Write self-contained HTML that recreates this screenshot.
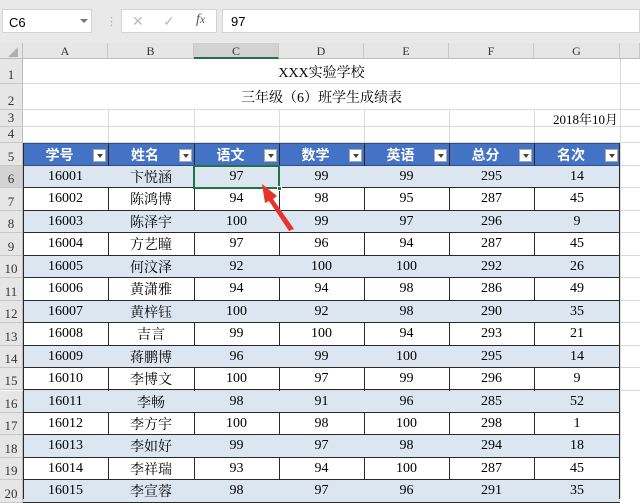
<!DOCTYPE html><html><head><meta charset="utf-8"><style>
body{margin:0;width:640px;height:499px;overflow:hidden;background:#fff;font-family:"Liberation Serif","Noto Serif CJK SC",serif;position:relative}
.a{position:absolute;box-sizing:border-box}
.c{position:absolute;box-sizing:border-box;display:flex;align-items:center;justify-content:center;font-size:14px;color:#000}
.rh{position:absolute;left:0;width:23px;background:#e6e6e6;border-bottom:1px solid #c8c8c8;border-right:1px solid #bdbdbd;font-size:13px;color:#333;display:flex;align-items:flex-end;justify-content:center;box-sizing:border-box;font-family:"Liberation Serif",serif}
.ch{position:absolute;top:43px;height:16px;background:#e6e6e6;border-right:1px solid #c8c8c8;border-bottom:1px solid #bdbdbd;font-size:12px;color:#333;text-align:center;line-height:16px;box-sizing:border-box}
.dd{position:absolute;width:13px;height:13px;background:#fff;border:1px solid #aaa;box-sizing:border-box}
.dd:after{content:"";position:absolute;left:3px;top:4px;border:3px solid transparent;border-top:4px solid #444}
</style></head><body>
<div class="a" style="left:0;top:0;width:640px;height:43px;background:#e9e9e9"></div>
<div class="a" style="left:2px;top:9px;width:90px;height:24px;background:#fff;border:1px solid #d4d4d4;font:13px 'Liberation Sans',sans-serif;padding:5px 6px">C6</div>
<div class="a" style="left:80px;top:19px;border:4px solid transparent;border-top:4px solid #777"></div>
<div class="a" style="left:106px;top:15px;color:#aaa;font:11px sans-serif">⋮</div>
<div class="a" style="left:121px;top:9px;width:96px;height:24px;background:#fff;border:1px solid #d4d4d4;font:14px 'Liberation Sans',sans-serif;color:#bbb"><span style="position:absolute;left:10px;top:3px">✕</span><span style="position:absolute;left:41px;top:3px">✓</span><span style="position:absolute;left:74px;top:2px;color:#555;font-style:italic;font-family:'Liberation Serif'">f<small>x</small></span></div>
<div class="a" style="left:222px;top:9px;width:418px;height:24px;background:#fff;border:1px solid #d4d4d4;font:13px 'Liberation Sans',sans-serif;padding:4px 8px">97</div>
<div class="a" style="left:0;top:43px;width:23px;height:16px;background:#e6e6e6;border-right:1px solid #bdbdbd;border-bottom:1px solid #bdbdbd"></div>
<div class="a" style="left:8px;top:47px;border:5px solid transparent;border-right-color:#b0b0b0;border-bottom-color:#b0b0b0"></div>
<div id="g"></div>
<svg class="a" style="left:0;top:0" width="640" height="499"><path d="M262 184 L277 196 L273 199 L294 229 L289 231 L269 201 L265 203 Z" fill="#e8322c"/></svg>
<script>
var cx=[23,108,194,279,364,449,534,620];
var L="ABCDEFG",h="";
for(var i=0;i<7;i++)h+='<div class="ch" style="left:'+cx[i]+'px;width:'+(cx[i+1]-cx[i])+'px;'+(i==2?'background:#d2d2d2;border-bottom:2px solid #217346;':'')+'">'+L[i]+'</div>';
h+='<div class="ch" style="left:620px;width:20px"></div>';
var rt=[59,84,110,127,143,166];
for(var r=6;r<=20;r++)rt.push(166+(r-5)*22.45);
for(var r=1;r<=15;r++){var t=rt[r-1],b=rt[r];h+='<div class="rh" style="top:'+(t)+'px;height:'+(b-t)+'px;'+(r==6?'background:#d2d2d2;':'')+'">'+r+'</div>';
 h+='<div class="a" style="left:23px;top:'+(b-1)+'px;width:617px;height:1px;background:#dadada"></div>';}
for(var r=16;r<=20;r++){var t=rt[r-1];h+='<div class="rh" style="top:'+t+'px;height:22.45px">'+r+'</div>';}
h+='<div class="a" style="left:620px;top:59px;width:1px;height:440px;background:#dadada"></div>';
for(var i=1;i<7;i++)h+='<div class="a" style="left:'+cx[i]+'px;top:110px;width:1px;height:33px;background:#dadada"></div>';
h+='<div class="c" style="left:23px;top:59px;width:597px;height:25px;font-size:14px">XXX实验学校</div>';
h+='<div class="c" style="left:23px;top:84px;width:597px;height:26px;font-size:14px">三年级（6）班学生成绩表</div>';
h+='<div class="c" style="left:534px;top:110px;width:84px;height:17px;justify-content:flex-end;font-size:13px">2018年10月</div>';
var hd=["学号","姓名","语文","数学","英语","总分","名次"];
h+='<div class="a" style="left:23px;top:143px;width:597px;height:23px;background:#4472c4;border:1px solid #2f4f86"></div>';
for(var i=0;i<7;i++){h+='<div class="c" style="left:'+cx[i]+'px;top:143px;width:'+(cx[i+1]-cx[i]-12)+'px;height:23px;color:#fff;font-weight:bold;font-family:\'Noto Sans CJK SC\',sans-serif;font-size:14px">'+hd[i]+'</div><div class="dd" style="left:'+(cx[i+1]-15)+'px;top:149px"></div>';
 if(i>0)h+='<div class="a" style="left:'+cx[i]+'px;top:143px;width:1px;height:356px;background:#2a2a2a"></div>';}
var D=[["16001","卞悦涵",97,99,99,295,14],["16002","陈鸿博",94,98,95,287,45],["16003","陈泽宇",100,99,97,296,9],["16004","方艺瞳",97,96,94,287,45],["16005","何汶泽",92,100,100,292,26],["16006","黄潇雅",94,94,98,286,49],["16007","黄梓钰",100,92,98,290,35],["16008","吉言",99,100,94,293,21],["16009","蒋鹏博",96,99,100,295,14],["16010","李博文",100,97,99,296,9],["16011","李畅",98,91,96,285,52],["16012","李方宇",100,98,100,298,1],["16013","李如好",99,97,98,294,18],["16014","李祥瑞",93,94,100,287,45],["16015","李宣蓉",98,97,96,291,35]];
for(var r=0;r<15;r++){var t=rt[r+5];
 h+='<div class="a" style="left:23px;top:'+t+'px;width:597px;height:22.45px;'+(r%2==0?'background:#dce6f1;':'')+'border-bottom:1px solid #2a2a2a"></div>';
 for(var i=0;i<7;i++)h+='<div class="c" style="left:'+cx[i]+'px;top:'+t+'px;width:'+(cx[i+1]-cx[i])+'px;height:22px">'+D[r][i]+'</div>';}
h+='<div class="a" style="left:23px;top:143px;width:1px;height:356px;background:#2a2a2a"></div><div class="a" style="left:619px;top:143px;width:1px;height:356px;background:#2a2a2a"></div>';
h+='<div class="a" style="left:193px;top:165px;width:87px;height:24px;border:2px solid #217346"></div><div class="a" style="left:277px;top:186px;width:5px;height:5px;background:#217346;border:1px solid #fff"></div>';
document.getElementById("g").innerHTML=h;
</script>
</body></html>
